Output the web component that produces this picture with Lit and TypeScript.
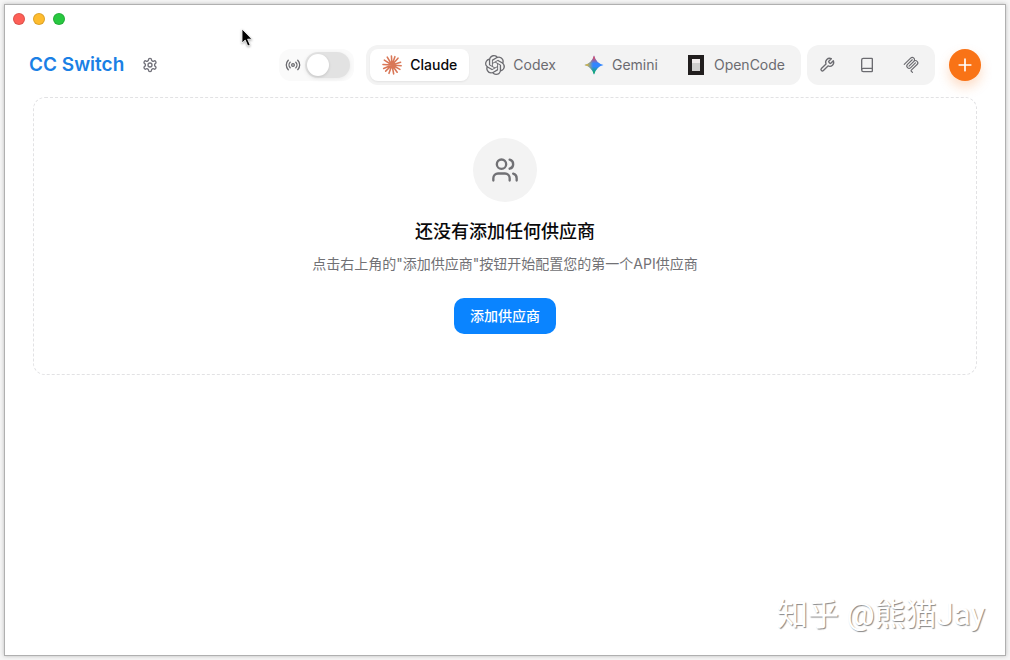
import { LitElement, html, svg, css } from "lit";
import { customElement, property, state } from "lit/decorators.js";

const glyphs: Record<string, unknown> = {
  settings: svg`<path d="M12.22 2h-.44a2 2 0 0 0-2 2v.18a2 2 0 0 1-1 1.73l-.43.25a2 2 0 0 1-2 0l-.15-.08a2 2 0 0 0-2.73.73l-.22.38a2 2 0 0 0 .73 2.73l.15.1a2 2 0 0 1 1 1.72v.51a2 2 0 0 1-1 1.74l-.15.09a2 2 0 0 0-.73 2.73l.22.38a2 2 0 0 0 2.73.73l.15-.08a2 2 0 0 1 2 0l.43.25a2 2 0 0 1 1 1.73V20a2 2 0 0 0 2 2h.44a2 2 0 0 0 2-2v-.18a2 2 0 0 1 1-1.73l.43-.25a2 2 0 0 1 2 0l.15.08a2 2 0 0 0 2.73-.73l.22-.39a2 2 0 0 0-.73-2.73l-.15-.08a2 2 0 0 1-1-1.74v-.5a2 2 0 0 1 1-1.74l.15-.09a2 2 0 0 0 .73-2.73l-.22-.38a2 2 0 0 0-2.73-.73l-.15.08a2 2 0 0 1-2 0l-.43-.25a2 2 0 0 1-1-1.73V4a2 2 0 0 0-2-2z"/><circle cx="12" cy="12" r="3"/>`,
  radio: svg`<path d="M4.9 19.1C1 15.2 1 8.8 4.9 4.9"/><path d="M7.8 16.2c-2.3-2.3-2.3-6.1 0-8.5"/><circle cx="12" cy="12" r="2"/><path d="M16.2 7.8c2.3 2.3 2.3 6.1 0 8.5"/><path d="M19.1 4.9C23 8.8 23 15.1 19.1 19"/>`,
  wrench: svg`<path d="M14.7 6.3a1 1 0 0 0 0 1.4l1.6 1.6a1 1 0 0 0 1.4 0l3.77-3.77a6 6 0 0 1-7.94 7.94l-6.91 6.91a2.12 2.12 0 0 1-3-3l6.91-6.91a6 6 0 0 1 7.94-7.94l-3.76 3.76z"/>`,
  book: svg`<path d="M4 19.5v-15A2.5 2.5 0 0 1 6.5 2H19a1 1 0 0 1 1 1v18a1 1 0 0 1-1 1H6.500a1 1 0 0 1 0-5H20"/>`,
  users: svg`<path d="M16 21v-2a4 4 0 0 0-4-4H6a4 4 0 0 0-4 4v2"/><circle cx="9" cy="7" r="4"/><path d="M22 21v-2a4 4 0 0 0-3-3.870"/><path d="M16 3.130a4 4 0 0 1 0 7.750"/>`,
  plus: svg`<path d="M5 12h14M12 5v14"/>`,
  mcp: svg`<g fill="currentColor" stroke="none"><path d="M15.688 2.343a2.588 2.588 0 00-3.61 0l-9.626 9.44a.863.863 0 01-1.203 0 .823.823 0 010-1.18l9.626-9.44a4.313 4.313 0 016.016 0 4.116 4.116 0 011.204 3.54 4.3 4.3 0 013.609 1.18l.05.05a4.115 4.115 0 010 5.9l-8.706 8.537a.274.274 0 000 .393l1.788 1.754a.823.823 0 010 1.18.863.863 0 01-1.203 0l-1.788-1.753a1.92 1.92 0 010-2.754l8.706-8.538a2.47 2.47 0 000-3.54l-.05-.049a2.588 2.588 0 00-3.607-.003l-7.172 7.034-.002.002-.098.097a.863.863 0 01-1.204 0 .823.823 0 010-1.180l7.273-7.133a2.47 2.47 0 00-.003-3.537z"/><path d="M14.485 4.703a.823.823 0 000-1.18.863.863 0 00-1.204 0l-7.119 6.982a4.115 4.115 0 000 5.9 4.314 4.314 0 006.016 0l7.12-6.982a.823.823 0 000-1.18.863.863 0 00-1.204 0l-7.119 6.982a2.588 2.588 0 01-3.61 0 2.47 2.47 0 010-3.54l7.12-6.982z"/></g>`,
  claude: svg`<g stroke="#d97757" stroke-width="1.900"><path d="M12 12 11.300 1.200M12 12l3.500-10M12 12l7.200-8.200M12 12l10.300-3.200M12 12l11 .8M12 12l9.500 5.300M12 12l6.200 8.700M12 12l2 10.700M12 12l-3.600 10M12 12l-7.600 7.300M12 12l-10 4.200M12 12 1.200 11.500M12 12 2.800 6.200M12 12 6.300 2.600"/></g>`,
  codex: svg`<path fill="currentColor" stroke="none" d="M22.2819 9.8211a5.9847 5.9847 0 0 0-.5157-4.9108 6.0462 6.0462 0 0 0-6.5098-2.9A6.0651 6.0651 0 0 0 4.9807 4.1818a5.9847 5.9847 0 0 0-3.9977 2.9 6.0462 6.0462 0 0 0 .7427 7.0966 5.98 5.98 0 0 0 .511 4.9107 6.051 6.051 0 0 0 6.5146 2.9001A5.9847 5.9847 0 0 0 13.2599 24a6.0557 6.0557 0 0 0 5.7718-4.2058 5.9894 5.9894 0 0 0 3.9977-2.9001 6.0557 6.0557 0 0 0-.7475-7.0729zm-9.022 12.6081a4.4755 4.4755 0 0 1-2.8764-1.0408l.1419-.0804 4.7783-2.7582a.7948.7948 0 0 0 .3927-.6813v-6.7369l2.02 1.1686a.071.071 0 0 1 .038.052v5.5826a4.504 4.504 0 0 1-4.4945 4.4944zm-9.6607-4.1254a4.4708 4.4708 0 0 1-.5346-3.0137l.142.0852 4.783 2.7582a.7712.7712 0 0 0 .7806 0l5.8428-3.3685v2.3324a.0804.0804 0 0 1-.0332.0615L9.74 19.9502a4.4992 4.4992 0 0 1-6.1408-1.6464zM2.3408 7.8956a4.485 4.485 0 0 1 2.3655-1.9728V11.600a.7664.7664 0 0 0 .3879.6765l5.8144 3.3543-2.0201 1.1685a.0757.0757 0 0 1-.071 0l-4.8303-2.7865A4.504 4.504 0 0 1 2.3408 7.872zm16.5963 3.8558L13.1038 8.364 15.1192 7.200a.0757.0757 0 0 1 .071 0l4.8303 2.7913a4.4944 4.4944 0 0 1-.6765 8.1042v-5.6772a.79.79 0 0 0-.407-.667zm2.0107-3.0231l-.142-.0852-4.7735-2.7818a.7759.7759 0 0 0-.7854 0L9.409 9.2297V6.8974a.0662.0662 0 0 1 .0284-.0615l4.8303-2.7866a4.4992 4.4992 0 0 1 6.6802 4.66zM8.3065 12.863l-2.02-1.1638a.0804.0804 0 0 1-.038-.0567V6.0742a4.4992 4.4992 0 0 1 7.3757-3.4537l-.142.0805L8.704 5.459a.7948.7948 0 0 0-.3927.6813zm1.0976-2.3654l2.602-1.4998 2.6069 1.4998v2.9994l-2.5974 1.4997-2.6067-1.4997Z"/>`,
  gemini: svg`<defs><linearGradient id="r" x1="12" y1="0" x2="12" y2="12" gradientUnits="userSpaceOnUse"><stop offset=".2" stop-color="#f04452"/><stop offset=".85" stop-color="#f04452" stop-opacity="0"/></linearGradient><linearGradient id="g" x1="12" y1="24" x2="12" y2="12" gradientUnits="userSpaceOnUse"><stop offset=".2" stop-color="#0eae55"/><stop offset=".85" stop-color="#0eae55" stop-opacity="0"/></linearGradient><linearGradient id="y" x1="0" y1="12" x2="12" y2="12" gradientUnits="userSpaceOnUse"><stop offset=".2" stop-color="#f5bd1c"/><stop offset=".9" stop-color="#f5bd1c" stop-opacity="0"/></linearGradient></defs>${["#3186ff", "url(#g)", "url(#r)", "url(#y)"].map((fill) => svg`<path stroke="none" fill=${fill} d="M12 .6Q14.400 9.600 23.400 12 14.400 14.400 12 23.400 9.600 14.400.6 12 9.600 9.600 12 .6z"/>`)}`,
  opencode: svg`<g stroke="none"><path fill="#211e1e" d="M2.400 0h19.200v24H2.400z"/><path fill="#f1ecec" d="M7.200 4.800h9.600v14.400H7.200z"/><path fill="#cfcecd" d="M7.200 9.600h9.600v9.600H7.200z"/></g>`,
};

@customElement("ui-icon")
class UiIcon extends LitElement {
  @property() name = "plus";
  static styles = css`
    :host { display: block; width: 16px; height: 16px; flex: none; }
    svg { display: block; width: 100%; height: 100%; overflow: visible; }
  `;
  render() {
    return html`<svg viewBox="0 0 24 24" fill="none" stroke="currentColor" stroke-width="2" stroke-linecap="round" stroke-linejoin="round" aria-hidden="true">${glyphs[this.name]}</svg>`;
  }
}

@customElement("app-root")
class AppRoot extends LitElement {
  @state() private active = "Claude";
  private apps = ["Claude", "Codex", "Gemini", "OpenCode"];

  static styles = css`
    :host {
      display: block;
      box-sizing: border-box;
      min-height: 100vh;
      padding: 5px;
      background: #f6f6f6;
      color: #09090b;
      font: 14px/20px Inter, "Noto Sans CJK SC", sans-serif;
    }
    * { box-sizing: border-box; }
    button { border: 0; margin: 0; padding: 0; font: inherit; color: inherit; background: none; cursor: pointer; }
    .window {
      position: relative;
      min-height: calc(100vh - 10px);
      background: #fff;
      box-shadow: 0 0 0 1px #b0b0b0, 0 0 4px 1px #bbb;
    }
    .titlebar { display: flex; gap: 8px; padding: 8px; height: 40px; }
    .light { width: 12px; height: 12px; border-radius: 50%; border: 1px solid #0002; }
    .close { background: #fe5f57; }
    .minimize { background: #febc2e; }
    .maximize { background: #28c840; }
    .header { display: flex; align-items: center; padding: 0 24px; }
    .brand { margin: 0; font-size: 19px; line-height: 28px; font-weight: 600; color: #1a80e5; text-decoration: none; }
    .gear { display: grid; place-items: center; width: 32px; height: 32px; margin-left: 10px; color: #71717a; }
    .actions { display: flex; align-items: center; margin-left: auto; color: #6b6b70; }
    .proxy {
      display: flex; align-items: center; gap: 4px;
      height: 32px; padding: 0 4px 0 6px; margin-right: 12px;
      border-radius: 12px; background: #fafafa;
    }
    .toggle {
      appearance: none; display: flex; align-items: center;
      width: 45px; height: 26px; margin: 0; padding: 2px;
      border-radius: 13px; background: #e2e2e2; cursor: pointer;
      box-shadow: 0 1px 4px #0001;
    }
    .toggle::before { content: ""; width: 22px; height: 22px; border-radius: 50%; background: #fff; box-shadow: 0 1px 3px #0002; }
    .toggle:checked { background: #0a84ff; justify-content: flex-end; }
    .group { display: flex; gap: 4px; padding: 4px; border-radius: 12px; background: #f3f3f3; }
    .tab { display: flex; align-items: center; gap: 8px; height: 32px; padding: 0 12px; border-radius: 8px; font-weight: 400; }
    .tab ui-icon { width: 20px; height: 20px; }
    .selected { color: #09090b; background: #fff; box-shadow: 0 1px 2px #0001; font-weight: 500; }
    .tools { margin: 0 14px 0 6px; }
    .tool { display: grid; place-items: center; width: 40px; height: 32px; }
    .tool:first-child { width: 32px; }
    .add {
      display: grid; place-items: center; width: 32px; height: 32px;
      border-radius: 50%; color: #fff; background: #f97316;
      box-shadow: 0 6px 12px #f9731640;
    }
    .add ui-icon { width: 20px; height: 20px; }
    .empty {
      display: flex; flex-direction: column; align-items: center;
      margin: 12px 28px; padding: 40px;
      border: 1px dashed #e2e2e4; border-radius: 12px; text-align: center;
    }
    .avatar { display: grid; place-items: center; width: 64px; height: 64px; border-radius: 50%; background: #f3f3f3; color: #717175; }
    .avatar ui-icon { width: 28px; height: 28px; }
    .title { margin: 16px 0 0; font-size: 18px; line-height: 28px; font-weight: 500; }
    .hint { margin: 8px 0 24px; color: #717175; }
    .primary { height: 36px; padding: 0 16px; border-radius: 10px; background: #0a84ff; color: #fff; font-weight: 500; }
    .cursor { position: absolute; left: 236px; top: 23px; width: 12px; height: 19px; filter: drop-shadow(0 1px 1px #0005); }
    .watermark {
      position: absolute; right: 20px; bottom: 20px;
      font: 31px/40px Roboto, "Noto Sans CJK SC", sans-serif;
      color: #fff; text-shadow: 1px 1px 1px #888;
    }
  `;

  render() {
    return html`
      <main class="window">
        <div class="titlebar">
          <span class="light close"></span><span class="light minimize"></span><span class="light maximize"></span>
        </div>
        <header class="header">
          <a class="brand" href="#">CC Switch</a>
          <button class="gear" aria-label="设置"><ui-icon name="settings"></ui-icon></button>
          <div class="actions">
            <label class="proxy"><ui-icon name="radio"></ui-icon><input class="toggle" type="checkbox" role="switch" aria-label="代理" /></label>
            <nav class="group">
              ${this.apps.map((app) => html`
                <button class="tab ${app === this.active ? "selected" : ""}" @click=${() => (this.active = app)}>
                  <ui-icon name=${app.toLowerCase()}></ui-icon>${app}
                </button>`)}
            </nav>
            <div class="group tools">
              <button class="tool" aria-label="Skills"><ui-icon name="wrench"></ui-icon></button>
              <button class="tool" aria-label="Prompts"><ui-icon name="book"></ui-icon></button>
              <button class="tool" aria-label="MCP"><ui-icon name="mcp"></ui-icon></button>
            </div>
            <button class="add" aria-label="添加"><ui-icon name="plus"></ui-icon></button>
          </div>
        </header>
        <section class="empty">
          <div class="avatar"><ui-icon name="users"></ui-icon></div>
          <h1 class="title">还没有添加任何供应商</h1>
          <p class="hint">点击右上角的"添加供应商"按钮开始配置您的第一个API供应商</p>
          <button class="primary">添加供应商</button>
        </section>
        <svg class="cursor" viewBox="0 0 12 19" aria-hidden="true"><path d="M1 1v14l3.200-3 2.600 6 2.400-1-2.600-5.800H11z" fill="#000" stroke="#fff" stroke-width=".8"/></svg>
        <div class="watermark">知乎 @熊猫Jay</div>
      </main>
    `;
  }
}
